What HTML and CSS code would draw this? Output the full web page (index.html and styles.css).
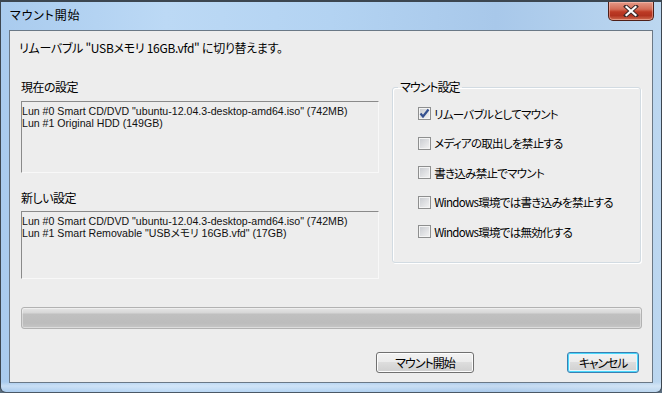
FILE: index.html
```html
<!DOCTYPE html>
<html lang="ja">
<head>
<meta charset="utf-8">
<title>マウント開始</title>
<link rel="stylesheet" href="styles.css">
</head>
<body>
<div class="window">
  <div class="titlebar">
    <span class="title">マウント開始</span>
    <button class="close" aria-label="閉じる">
      <svg width="16" height="12" viewBox="0 0 16 12">
        <path d="M3 1.5 L13 10.5 M13 1.5 L3 10.5" stroke="#3a2a2a" stroke-width="4" stroke-linecap="square"/>
        <path d="M3.5 2 L12.5 10 M12.5 2 L3.5 10" stroke="#ffffff" stroke-width="2.2" stroke-linecap="square"/>
      </svg>
    </button>
  </div>
  <div class="client">
    <p class="intro">リムーバブル "USBメモリ 16GB.vfd" に切り替えます。</p>
    <div class="columns">
      <div class="left">
        <div class="label">現在の設定</div>
        <div class="listbox lb1">
          <div>Lun #0 Smart CD/DVD "ubuntu-12.04.3-desktop-amd64.iso" (742MB)</div>
          <div>Lun #1 Original HDD (149GB)</div>
        </div>
        <div class="label label2">新しい設定</div>
        <div class="listbox lb2">
          <div>Lun #0 Smart CD/DVD "ubuntu-12.04.3-desktop-amd64.iso" (742MB)</div>
          <div>Lun #1 Smart Removable "USBメモリ 16GB.vfd" (17GB)</div>
        </div>
      </div>
      <fieldset class="group">
        <legend>マウント設定</legend>
        <label class="check"><span class="box checked"><svg width="11" height="11" viewBox="0 0 11 11"><path d="M1.5 5.5 L4 8.5 L9.5 1.5" fill="none" stroke="#34508f" stroke-width="2.2"/></svg></span>リムーバブルとしてマウント</label>
        <label class="check"><span class="box"></span>メディアの取出しを禁止する</label>
        <label class="check"><span class="box"></span>書き込み禁止でマウント</label>
        <label class="check"><span class="box"></span>Windows環境では書き込みを禁止する</label>
        <label class="check"><span class="box"></span>Windows環境では無効化する</label>
      </fieldset>
    </div>
    <div class="progress"></div>
    <div class="buttons">
      <button class="btn start">マウント開始</button>
      <button class="btn cancel default">キャンセル</button>
    </div>
  </div>
</div>
</body>
</html>
```
FILE: styles.css
```css
html, body {
  margin: 0;
  padding: 0;
}
body {
  width: 662px;
  height: 393px;
  overflow: hidden;
  font-family: "Noto Sans CJK JP", "Liberation Sans", sans-serif;
  font-feature-settings: "palt";
  font-size: 12px;
  color: #000;
  background: #5c6f80;
}
.window {
  box-sizing: border-box;
  width: 662px;
  height: 393px;
  display: flex;
  flex-direction: column;
  padding: 0 8px 9px 8px;
  border-top: 2px solid #3c4650;
  border-left: 1px solid #3c4650;
  border-right: 1px solid #3c4650;
  border-bottom: 1px solid #4a5866;
  border-radius: 0 0 6px 6px;
  background:
    linear-gradient(180deg, rgba(255,255,255,0) 0, rgba(255,255,255,0) 380px, rgba(255,255,255,0.35) 384px, rgba(255,255,255,0) 390px),
    linear-gradient(90deg, #a9cbee 0%, #bcd9f5 25%, #b3d3f2 50%, #a8c8ea 75%, #bcd7f0 100%);
}
.titlebar {
  height: 28px;
  display: flex;
  justify-content: space-between;
  align-items: flex-start;
  flex: none;
}
.title {
  margin-left: 1px;
  margin-top: 5px;
  line-height: 16px;
  font-size: 12px;
  letter-spacing: 0.8px;
}
.close {
  width: 46px;
  height: 19px;
  margin: 0 -1px 0 0;
  padding: 0;
  border: 1px solid #4e1f18;
  border-top: none;
  border-radius: 0 0 5px 5px;
  background: linear-gradient(180deg, #e59a88 0%, #d46c56 40%, #bd3a24 55%, #b1321f 75%, #cf6a4f 100%);
  box-shadow: inset 0 0 0 1px rgba(255,210,200,0.45);
  display: flex;
  align-items: center;
  justify-content: center;
}
.client {
  flex: 1;
  box-sizing: border-box;
  background: #ededed;
  border: 1px solid #6a7886;
  padding: 9px 11px 0 11px;
  display: flex;
  flex-direction: column;
}
.intro {
  margin: 0 0 0 -2px;
  line-height: 16px;
  font-size: 12px;
  letter-spacing: -0.3px;
}
.columns {
  display: flex;
  gap: 13px;
  margin-top: 23px;
}
.left {
  width: 360px;
  display: flex;
  flex-direction: column;
}
.label {
  line-height: 16px;
  font-size: 12px;
  letter-spacing: -0.5px;
}
.label2 {
  margin-top: 17px;
}
.listbox {
  box-sizing: border-box;
  margin-top: 6px;
  border-top: 1px solid #8a8a8a;
  border-left: 1px solid #8a8a8a;
  border-right: 1px solid #f8f8f8;
  border-bottom: 1px solid #f8f8f8;
  background: #ededed;
  padding: 3px 0 0 0;
  font-family: "Liberation Sans", "Noto Sans CJK JP", sans-serif;
  font-size: 10.6px;
  line-height: 12px;
  white-space: nowrap;
  color: #111;
}
.lb1 { height: 72px; }
.lb2 { height: 68px; margin-top: 5px; }
.group {
  box-sizing: border-box;
  width: 250px;
  height: 184px;
  margin: 0;
  padding: 4px 0 0 25px;
  border: 1px solid #d2dbe2;
  border-radius: 3px;
  box-shadow: inset 1px 1px 0 #ffffff, 1px 1px 0 #ffffff;
  display: flex;
  flex-direction: column;
}
.group legend {
  margin-left: -20px;
  padding: 0 2px;
  line-height: 16px;
  font-size: 12px;
  letter-spacing: -1px;
}
.check {
  display: flex;
  align-items: center;
  height: 29.5px;
  font-size: 11.5px;
  line-height: 16px;
  letter-spacing: -0.7px;
}
.box {
  box-sizing: border-box;
  width: 13px;
  height: 13px;
  margin-right: 3px;
  border: 1px solid #8e8f8f;
  background: linear-gradient(135deg, #c6c9ce 0%, #e2e3e5 60%, #f4f4f4 100%);
  box-shadow: inset 0 0 0 1px #f4f4f4;
  display: flex;
  align-items: center;
  justify-content: center;
  flex: none;
}
.box svg { display: block; }
.progress {
  box-sizing: border-box;
  height: 22px;
  margin-top: 28px;
  margin-right: -1px;
  border: 1px solid #b2b2b2;
  border-radius: 3px;
  background: linear-gradient(180deg, #e6e6e6 0%, #d6d6d6 25%, #c0c0c0 30%, #bcbcbc 75%, #c6c6c6 100%);
  box-shadow: inset 0 0 0 1px rgba(255,255,255,0.4);
}
.buttons {
  display: flex;
  justify-content: flex-end;
  gap: 93px;
  margin-top: 23px;
  padding-right: 2px;
}
.btn {
  box-sizing: border-box;
  height: 21px;
  padding: 0;
  border: 1px solid #707070;
  border-radius: 3px;
  background: linear-gradient(180deg, #f2f2f2 0%, #ebebeb 49%, #dddddd 50%, #cfcfcf 100%);
  box-shadow: inset 0 0 0 1px #fcfcfc;
  font-family: "Noto Sans CJK JP", sans-serif;
  font-feature-settings: "palt";
  font-size: 12px;
  line-height: 16px;
  color: #000;
}
.start { width: 98px; letter-spacing: -1px; }
.cancel { width: 72px; letter-spacing: -1.2px; }
.default {
  border-color: #3c7fb1;
  box-shadow: inset 0 0 0 1px #48d7fb, inset 0 0 0 2px #e6f5fc;
}
```
